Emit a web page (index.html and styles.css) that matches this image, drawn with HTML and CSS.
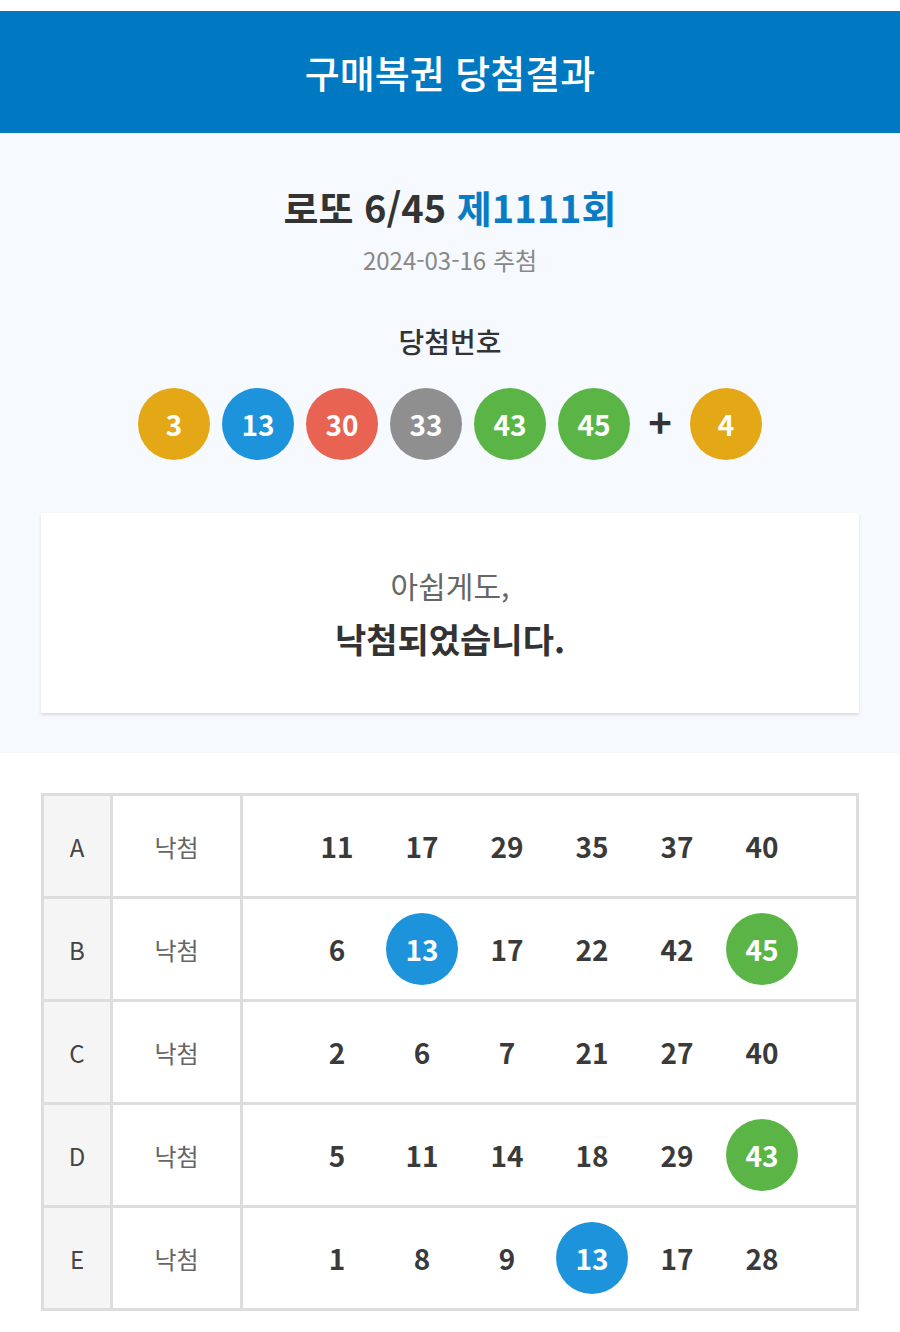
FILE: index.html
```
<!DOCTYPE html>
<html lang="ko">
<head>
	<meta charset="utf-8">
	<title>구매복권 당첨결과</title>
	<link rel="stylesheet" href="styles.css">
</head>
<body>
	<div class="header">구매복권 당첨결과</div>

	<div class="summary">
		<h1 class="round">로또 6/45 <span class="roundNo">제1111회</span></h1>
		<p class="date">2024-03-16 추첨</p>
		<h2 class="winTitle">당첨번호</h2>
		<div class="balls">
			<span class="ball yellow">3</span>
			<span class="ball blue">13</span>
			<span class="ball red">30</span>
			<span class="ball gray">33</span>
			<span class="ball green">43</span>
			<span class="ball green">45</span>
			<span class="plus">+</span>
			<span class="ball yellow">4</span>
		</div>
		<div class="resultCard">
			<p class="sorry">아쉽게도,</p>
			<p class="lose">낙첨되었습니다.</p>
		</div>
	</div>

	<div class="tickets">
		<table class="ticketTable">
			<tr>
				<td class="slot">A</td>
				<td class="state">낙첨</td>
				<td class="nums"><div class="numRow"><span>11</span><span>17</span><span>29</span><span>35</span><span>37</span><span>40</span></div></td>
			</tr>
			<tr>
				<td class="slot">B</td>
				<td class="state">낙첨</td>
				<td class="nums"><div class="numRow"><span>6</span><span class="hit blue">13</span><span>17</span><span>22</span><span>42</span><span class="hit green">45</span></div></td>
			</tr>
			<tr>
				<td class="slot">C</td>
				<td class="state">낙첨</td>
				<td class="nums"><div class="numRow"><span>2</span><span>6</span><span>7</span><span>21</span><span>27</span><span>40</span></div></td>
			</tr>
			<tr>
				<td class="slot">D</td>
				<td class="state">낙첨</td>
				<td class="nums"><div class="numRow"><span>5</span><span>11</span><span>14</span><span>18</span><span>29</span><span class="hit green">43</span></div></td>
			</tr>
			<tr>
				<td class="slot">E</td>
				<td class="state">낙첨</td>
				<td class="nums"><div class="numRow"><span>1</span><span>8</span><span>9</span><span class="hit blue">13</span><span>17</span><span>28</span></div></td>
			</tr>
		</table>
	</div>
</body>
</html>
```

FILE: styles.css
```
html, body, h1, h2, p, table, td {
	margin: 0;
	padding: 0;
}
body {
	padding-top: 11px;
	background: #fff;
	color: #333;
	font-family: "Noto Sans CJK KR", "Noto Sans", sans-serif;
}
.header {
	height: 122px;
	background: #0079c2;
	color: #fff;
	font-size: 38px;
	font-weight: 500;
	line-height: 122px;
	text-align: center;
}
.summary {
	display: flex;
	flex-direction: column;
	align-items: center;
	padding: 50px 41px 40px;
	background: #f6f9fd;
}
.round {
	font-size: 38px;
	font-weight: 700;
	line-height: 48px;
	color: #333;
}
.roundNo {
	color: #0a7cc4;
}
.date {
	margin-top: 12px;
	font-size: 24px;
	line-height: 34px;
	color: #888;
}
.winTitle {
	margin-top: 44px;
	font-size: 28px;
	font-weight: 500;
	line-height: 40px;
	color: #333;
}
.balls {
	display: flex;
	align-items: center;
	gap: 12px;
	margin-top: 27px;
}
.ball {
	width: 72px;
	height: 72px;
	border-radius: 50%;
	color: #fff;
	font-size: 28px;
	font-weight: 700;
	line-height: 72px;
	text-align: center;
}
.plus {
	width: 36px;
	font-size: 40px;
	font-weight: 700;
	line-height: 72px;
	text-align: center;
	color: #333;
	margin-top: -6px;
}
.yellow { background: #e4a817; }
.blue { background: #1c93db; }
.red { background: #e86352; }
.gray { background: #8f8f8f; }
.green { background: #5bb546; }

.resultCard {
	align-self: stretch;
	margin-top: 53px;
	padding: 48px 0 50px;
	background: #fff;
	box-shadow: 0 2px 3px rgba(0,0,0,.12);
	text-align: center;
}
.sorry {
	font-size: 30px;
	line-height: 48px;
	color: #666;
}
.lose {
	margin-top: 6px;
	font-size: 34px;
	font-weight: 700;
	line-height: 48px;
	color: #333;
}

.tickets {
	padding: 40px 41px 0;
}
.ticketTable {
	width: 100%;
	border-collapse: collapse;
	border: 3px solid #ddd;
}
.ticketTable td {
	height: 100px;
	border: 3px solid #ddd;
	text-align: center;
	vertical-align: middle;
}
.slot {
	width: 66px;
	background: #f5f5f5;
	font-size: 24px;
	color: #444;
}
.state {
	width: 127px;
	font-size: 24px;
	color: #666;
}
.numRow {
	display: flex;
	justify-content: center;
	gap: 13px;
}
.numRow span {
	width: 72px;
	height: 72px;
	border-radius: 50%;
	font-size: 28px;
	font-weight: 700;
	line-height: 72px;
	color: #3a3a3a;
}
.numRow .hit {
	color: #fff;
}
```
